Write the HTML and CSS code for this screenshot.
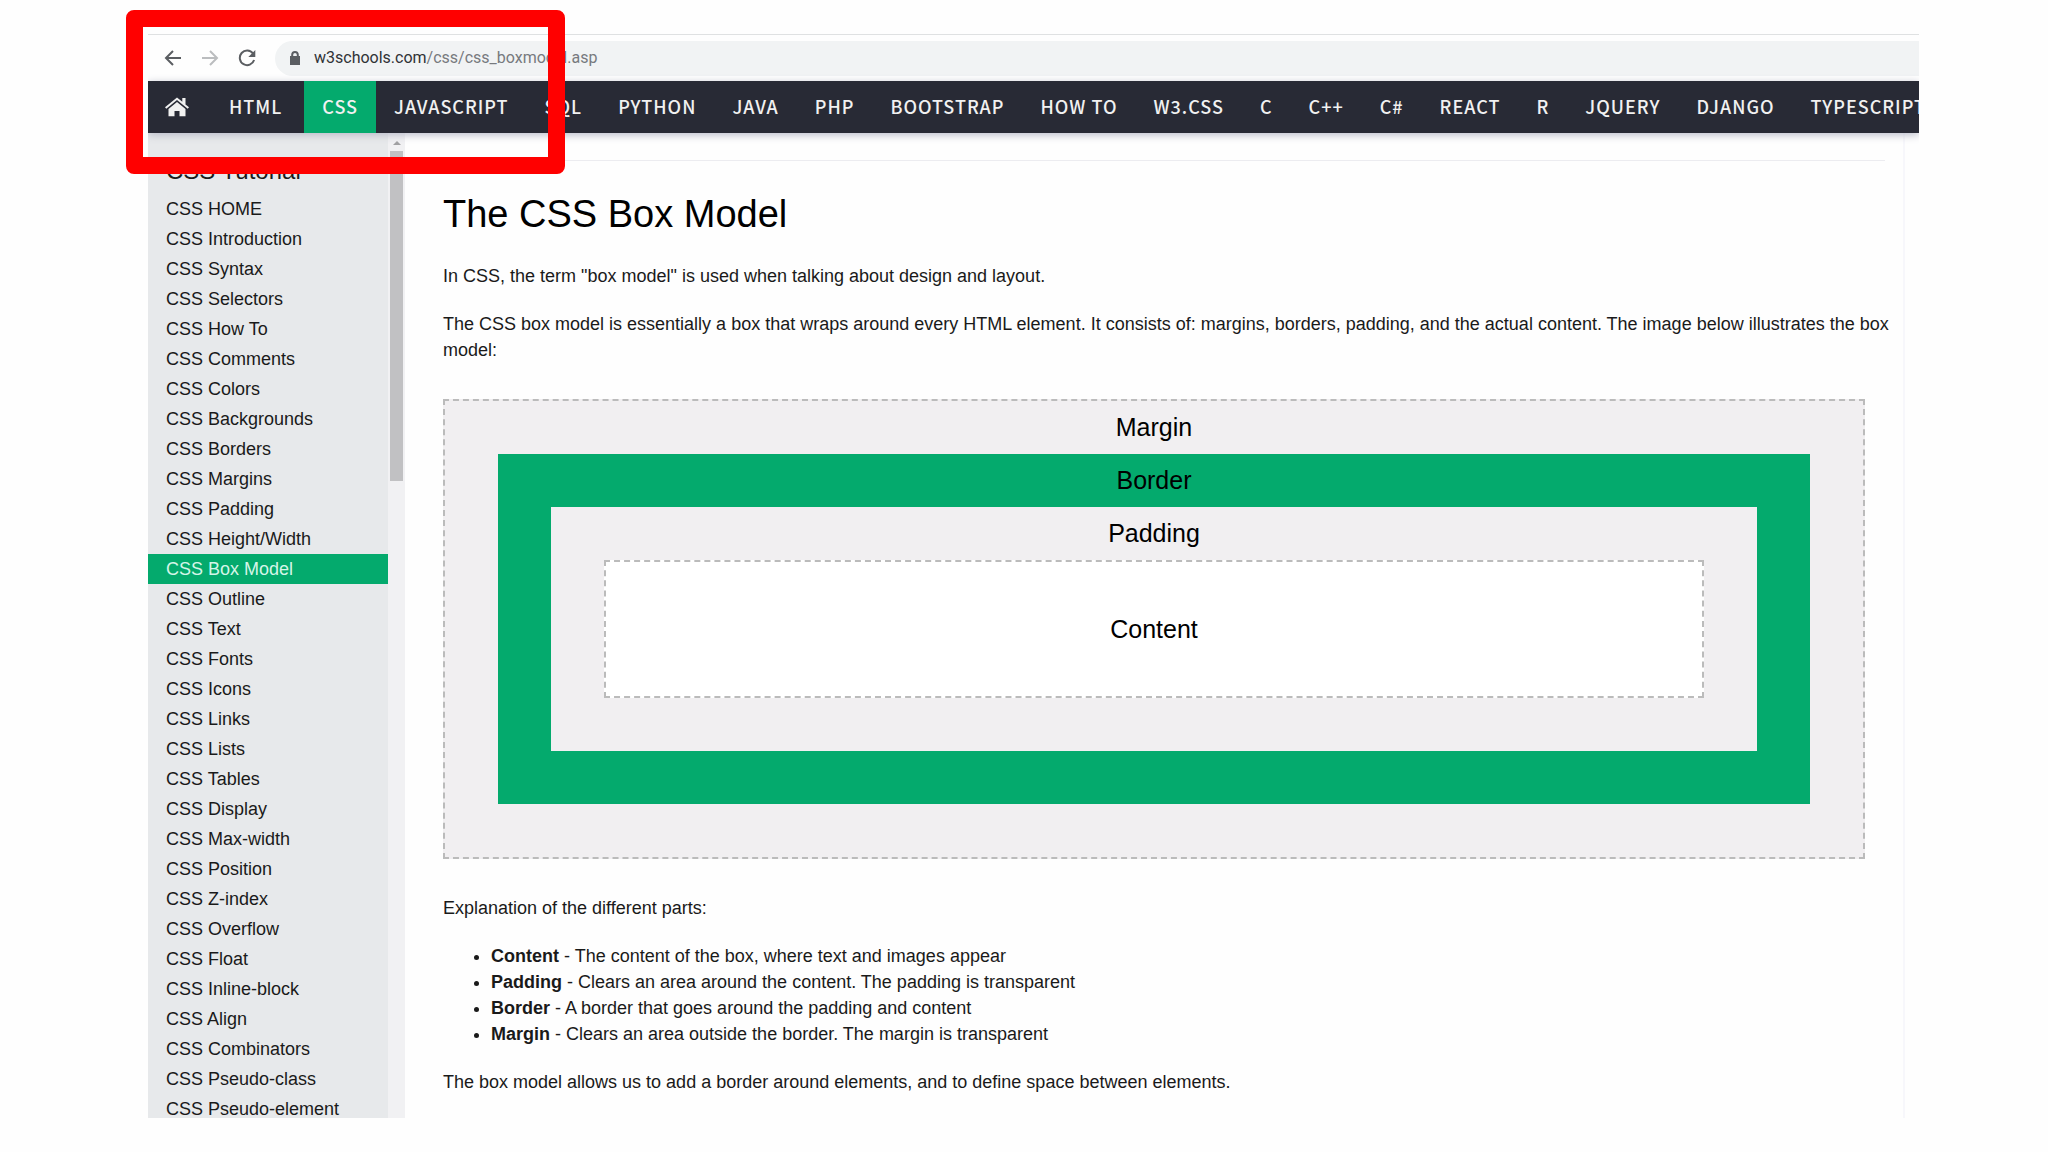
FILE: index.html
```html
<!DOCTYPE html>
<html lang="en">
<head>
  <meta charset="UTF-8" />
  <meta name="viewport" content="width=device-width, initial-scale=1.0"/>
  <title>CSS Box Model</title>
  <link rel="stylesheet" href="styles.css">
</head>
<body>
  <div class="browser">
    <div class="toolbar">
      <button type="button" class="tool" aria-label="Back">
        <svg viewBox="0 0 18 18"><path d="M17 9H2M9 2L2 9l7 7"/></svg>
      </button>
      <button type="button" class="tool disabled" aria-label="Forward" disabled>
        <svg viewBox="0 0 18 18"><path d="M1 9h15M9 2l7 7-7 7"/></svg>
      </button>
      <button type="button" class="tool" aria-label="Reload">
        <svg viewBox="0 0 18 18"><path d="M15 4.500A7.300 7.300 0 1 0 16.100 11"/><path class="fill" d="M17.300 1v7h-7z"/></svg>
      </button>
      <div class="address">
        <svg class="lock" viewBox="0 0 10 14"><path d="M0 5h10v9H0z"/><path class="shackle" d="M2.200 6V3.800a2.800 2.800 0 0 1 5.600 0V6"/></svg>
        <div class="url" role="textbox" contenteditable="true" spellcheck="false" aria-label="Address"><span class="host">w3schools.com</span>/css/css_boxmodel.asp</div>
      </div>
    </div>

    <nav class="topnav">
      <a href="#" class="home" aria-label="Home">
        <svg viewBox="0 0 24 20"><path d="M12 5L3.500 12v7.200h6V14h5v5.200h6V12z"/><path d="M12 .500L0 10.300l1.300 1.500L12 3l10.700 8.800 1.300-1.500-3.500-2.900V1h-3.200v3.800z"/></svg>
      </a>
      <a href="#">HTML</a>
      <a href="#" class="active">CSS</a>
      <a href="#">JAVASCRIPT</a>
      <a href="#">SQL</a>
      <a href="#">PYTHON</a>
      <a href="#">JAVA</a>
      <a href="#">PHP</a>
      <a href="#">BOOTSTRAP</a>
      <a href="#">HOW TO</a>
      <a href="#">W3.CSS</a>
      <a href="#">C</a>
      <a href="#">C++</a>
      <a href="#">C#</a>
      <a href="#">REACT</a>
      <a href="#">R</a>
      <a href="#">JQUERY</a>
      <a href="#">DJANGO</a>
      <a href="#">TYPESCRIPT</a>
    </nav>

    <div class="page">
      <aside class="sidebar">
        <div class="menu">
          <h2>CSS Tutorial</h2>
          <a href="#">CSS HOME</a>
          <a href="#">CSS Introduction</a>
          <a href="#">CSS Syntax</a>
          <a href="#">CSS Selectors</a>
          <a href="#">CSS How To</a>
          <a href="#">CSS Comments</a>
          <a href="#">CSS Colors</a>
          <a href="#">CSS Backgrounds</a>
          <a href="#">CSS Borders</a>
          <a href="#">CSS Margins</a>
          <a href="#">CSS Padding</a>
          <a href="#">CSS Height/Width</a>
          <a href="#" class="active">CSS Box Model</a>
          <a href="#">CSS Outline</a>
          <a href="#">CSS Text</a>
          <a href="#">CSS Fonts</a>
          <a href="#">CSS Icons</a>
          <a href="#">CSS Links</a>
          <a href="#">CSS Lists</a>
          <a href="#">CSS Tables</a>
          <a href="#">CSS Display</a>
          <a href="#">CSS Max-width</a>
          <a href="#">CSS Position</a>
          <a href="#">CSS Z-index</a>
          <a href="#">CSS Overflow</a>
          <a href="#">CSS Float</a>
          <a href="#">CSS Inline-block</a>
          <a href="#">CSS Align</a>
          <a href="#">CSS Combinators</a>
          <a href="#">CSS Pseudo-class</a>
          <a href="#">CSS Pseudo-element</a>
        </div>
        <div class="scrollbar">
          <div class="arrow"></div>
          <div class="thumb"></div>
        </div>
      </aside>

      <main class="main">
        <hr>
        <h1>The CSS Box Model</h1>
        <p>In CSS, the term "box model" is used when talking about design and layout.</p>
        <p>The CSS box model is essentially a box that wraps around every HTML element. It consists of: margins, borders, padding, and the actual content. The image below illustrates the box model:</p>

        <div class="box-margin">
          <div class="label">Margin</div>
          <div class="box-border">
            <div class="label">Border</div>
            <div class="box-padding">
              <div class="label">Padding</div>
              <div class="box-content">Content</div>
            </div>
          </div>
        </div>

        <p>Explanation of the different parts:</p>
        <ul>
          <li><strong>Content</strong> - The content of the box, where text and images appear</li>
          <li><strong>Padding</strong> - Clears an area around the content. The padding is transparent</li>
          <li><strong>Border</strong> - A border that goes around the padding and content</li>
          <li><strong>Margin</strong> - Clears an area outside the border. The margin is transparent</li>
        </ul>
        <p>The box model allows us to add a border around elements, and to define space between elements.</p>
      </main>
    </div>
  </div>
  <div class="highlight"></div>
</body>
</html>
```
FILE: styles.css
```css
* {
  box-sizing: border-box;
}
body {
  margin: 0;
  background-color: #fefefe;
  color: #1a1a1a;
  font-family: "Liberation Sans", Arial, sans-serif;
  font-size: 18px;
  line-height: 26px;
}
a {
  text-decoration: none;
}
.browser {
  display: flex;
  flex-direction: column;
  height: calc(100vh - 68px);
  margin: 34px 129px 34px 148px;
  overflow: hidden;
}

/* browser toolbar */
.toolbar {
  display: flex;
  align-items: center;
  gap: 19px;
  height: 47px;
  flex-shrink: 0;
  padding-left: 16px;
  border-top: 1px solid #dfe1e2;
}
.tool {
  width: 18px;
  height: 18px;
  padding: 0;
  border: none;
  background: none;
  cursor: pointer;
}
.tool svg {
  display: block;
  fill: none;
  stroke: #5b5e62;
  stroke-width: 2;
}
.tool .fill {
  fill: #5b5e62;
  stroke: none;
}
.tool.disabled svg {
  stroke: #bbbdbf;
}
.address {
  display: flex;
  align-items: center;
  gap: 14px;
  flex: 1;
  height: 35px;
  padding-left: 15px;
  border-radius: 18px 0 0 18px;
  background-color: #f1f3f4;
}
.lock {
  width: 10px;
  height: 14px;
  fill: #5b5e62;
}
.lock .shackle {
  fill: none;
  stroke: #5b5e62;
  stroke-width: 2;
}
.url {
  color: #777a7e;
  font-family: Roboto, sans-serif;
  font-size: 16px;
  white-space: nowrap;
}
.host {
  color: #303236;
}

/* top navigation */
.topnav {
  display: flex;
  height: 52px;
  flex-shrink: 0;
  background-color: #282a35;
  box-shadow: 0 2px 8px #b9bbc8;
  position: relative;
}
.topnav a {
  padding: 0 18px;
  color: #f1f1f1;
  font-family: "Noto Sans CJK SC", sans-serif;
  font-size: 18px;
  font-weight: 500;
  letter-spacing: 1px;
  line-height: 50px;
  white-space: nowrap;
}
.topnav .active {
  margin-left: 4px;
  background-color: #04aa6d;
}
.topnav .home {
  display: flex;
  align-items: center;
  padding: 0 22px 0 17px;
}
.home svg {
  width: 24px;
  height: 20px;
  fill: #f1f1f1;
}

.page {
  display: flex;
  flex: 1;
  min-height: 0;
}

/* sidebar */
.sidebar {
  display: flex;
  width: 257px;
  flex-shrink: 0;
  background-color: #e7e9eb;
}
.menu {
  flex: 1;
  overflow: hidden;
  padding-top: 23px;
}
.menu h2 {
  margin: 0 0 8px;
  padding-left: 18px;
  font-size: 24px;
  font-weight: 400;
  line-height: 30px;
}
.menu a {
  display: block;
  padding-left: 18px;
  color: #1a1a1a;
  line-height: 30px;
}
.menu .active {
  background-color: #04aa6d;
  color: #d5f5e8;
}
.scrollbar {
  width: 17px;
  padding: 8px 2px;
  background-color: #f1f1f3;
}
.arrow {
  width: 8px;
  margin: 0 auto 6px;
  border: 4px solid transparent;
  border-top: none;
  border-bottom-color: #a0a0a2;
}
.thumb {
  height: 330px;
  background-color: #c1c1c3;
}

/* content */
.main {
  flex: 1;
  min-width: 0;
  margin-right: 14px;
  padding: 27px 38px 0;
  border-right: 2px solid #f7f7fb;
}
hr {
  height: 1px;
  margin: 0 -20px 0 0;
  border: none;
  background-color: #ececf0;
}
h1 {
  margin: 28px 0 24px;
  color: #000;
  font-size: 38px;
  font-weight: 400;
  line-height: 50px;
}
p {
  margin: 0 -30px 22px 0;
}
.box-margin {
  margin: 36px 0;
  border: 2px dashed #bbb;
}
.box-margin,
.box-border,
.box-padding {
  padding: 0 53px 53px;
}
.box-margin,
.box-padding {
  background-color: #f1eff1;
}
.box-margin .box-border {
  background-color: #04aa6d;
}
.label,
.box-content {
  color: #000;
  font-size: 25px;
  line-height: 53px;
  text-align: center;
}
.box-content {
  padding: 41px 0 40px;
  border: 2px dashed #bbb;
  background-color: #fff;
}
ul {
  margin: 0 0 22px;
  padding-left: 48px;
}

/* red frame over the address bar and menu */
.highlight {
  position: absolute;
  top: 10px;
  left: 126px;
  width: 439px;
  height: 164px;
  border: 17px solid #f00;
  border-radius: 8px;
  pointer-events: none;
}
```
